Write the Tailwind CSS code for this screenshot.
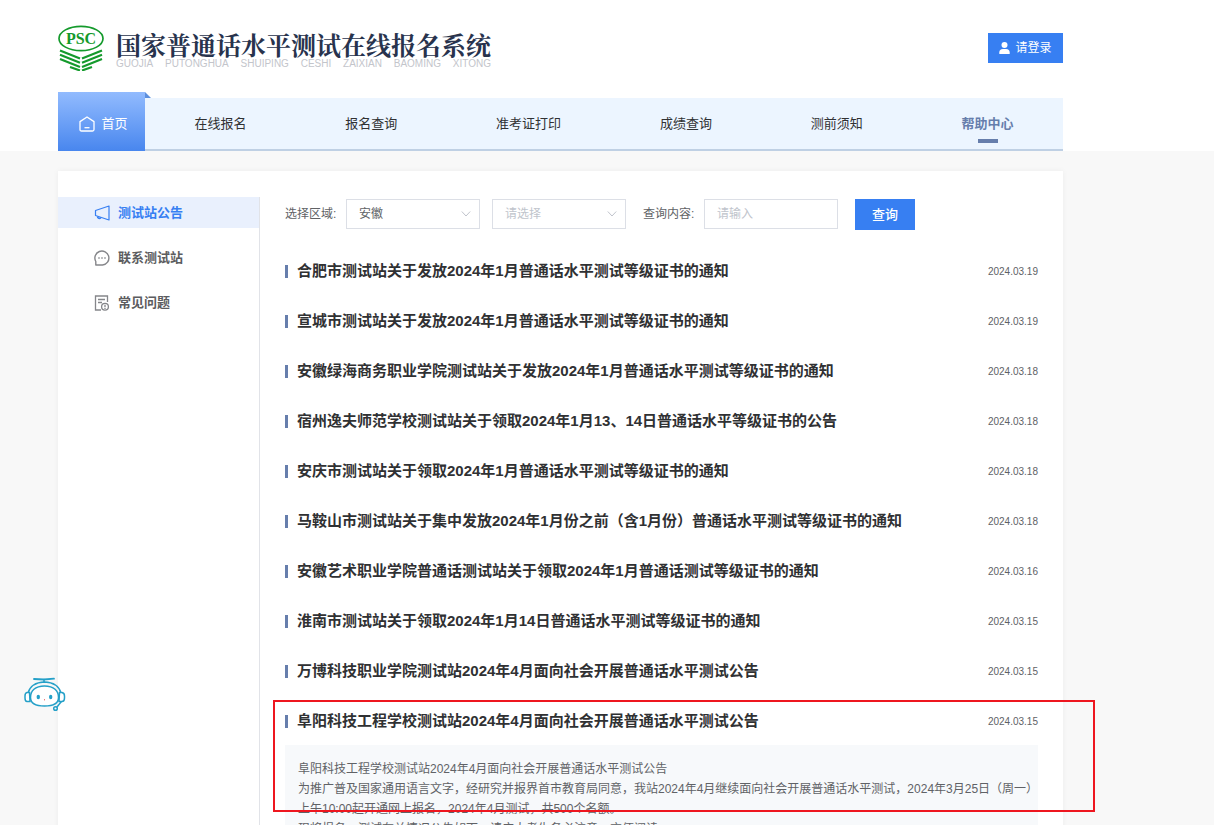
<!DOCTYPE html>
<html lang="zh-CN">
<head>
<meta charset="utf-8">
<meta name="viewport" content="width=device-width, initial-scale=1">
<title>国家普通话水平测试在线报名系统</title>
<script src="https://cdn.jsdelivr.net/npm/@tailwindcss/browser@4"></script>
</head>
<body class="h-screen overflow-hidden bg-[#f8f8f8] font-['Liberation_Sans','Noto_Sans_CJK_SC',sans-serif] text-[13px] text-[#303133]">
<header class="bg-white pl-[58px] pr-[151px]">
  <div class="flex h-[92px] items-center justify-between pt-1">
    <a href="#" class="flex items-center gap-3">
      <svg class="h-[46px] w-[46px]" viewBox="0 0 46 46" fill="none" stroke="#149a2c">
        <ellipse cx="23" cy="13.500" rx="22" ry="12.200" stroke-width="1.700"/>
        <text x="23" y="18.500" text-anchor="middle" font-family="Liberation Serif, serif" font-weight="700" font-size="16" fill="#149a2c" stroke="none">PSC</text>
        <g stroke-width="2.200">
          <path d="M2 25.500L22 33.500M2 29.800L22 37.800M2 34L22 42M12 42L22 45.500"/>
          <path d="M44 25.500L24 33.500M44 29.800L24 37.800M44 34L24 42M34 42L24 45.500"/>
        </g>
      </svg>
      <span class="flex flex-col pt-1">
        <span class="font-['Noto_Serif_CJK_SC','Noto_Sans_CJK_SC',serif] text-[25px] leading-7 font-bold text-[#28334d]">国家普通话水平测试在线报名系统</span>
        <span class="flex justify-between text-[10px] leading-3 text-[#c3c5cb]"><span>GUOJIA</span><span>PUTONGHUA</span><span>SHUIPING</span><span>CESHI</span><span>ZAIXIAN</span><span>BAOMING</span><span>XITONG</span></span>
      </span>
    </a>
    <button type="button" class="flex h-[30px] w-[75px] items-center justify-center gap-[5px] bg-[#377ff2] text-xs text-white">
      <svg class="h-3 w-[11px]" viewBox="0 0 11 12" fill="currentColor"><circle cx="5.500" cy="3" r="3"/><path d="M0.300 12V10.500Q0.300 7 4 7H7Q10.700 7 10.700 10.500V12Z"/></svg>
      请登录
    </button>
  </div>
  <nav class="flex items-end">
    <a href="#" class="relative flex h-[59px] w-[87px] items-center justify-center gap-1.5 bg-linear-to-b from-[#92bbfe] to-[#4886ee] pt-1 pl-1 text-white">
      <svg class="h-4 w-4" viewBox="0 0 16 16" fill="none" stroke="currentColor" stroke-width="1.300" stroke-linejoin="round"><path d="M1 5.600L8 1L15 5.600V13.500Q15 15 13.500 15H2.500Q1 15 1 13.500Z"/><path d="M5.500 11.700H10.500"/></svg>
      首页
      <svg class="absolute top-0 left-full h-1.5 w-1.5" viewBox="0 0 6 6" fill="#5d8fdd"><path d="M0 0L6 6H0Z"/></svg>
    </a>
    <div class="flex h-[53px] flex-1 border-b-2 border-[#bfd0e4] bg-[#ecf5ff]">
      <a href="#" class="flex flex-auto items-center justify-center">在线报名</a>
      <a href="#" class="flex flex-auto items-center justify-center">报名查询</a>
      <a href="#" class="flex flex-auto items-center justify-center">准考证打印</a>
      <a href="#" class="flex flex-auto items-center justify-center">成绩查询</a>
      <a href="#" class="flex flex-auto items-center justify-center">测前须知</a>
      <a href="#" class="relative flex flex-auto items-center justify-center font-bold text-[#667eac]">帮助中心<span class="absolute bottom-1.5 left-1/2 h-1 w-5 -translate-x-1/2 bg-[#667eac]"></span></a>
    </div>
  </nav>
</header>

<div class="pt-5 pl-[58px] pr-[151px]">
  <div class="flex min-h-screen bg-white pt-[26px] shadow-[0_0_6px_rgba(0,0,0,0.05)]">
    <aside class="w-[202px] shrink-0 border-r border-[#e1e3e8]">
      <ul class="flex flex-col gap-3.5 font-bold text-[#5c5d60]">
        <li><a href="#" class="flex h-[31px] items-center gap-2 bg-[#e9f0fd] pl-9 text-[#377ff2]">
          <svg class="h-4 w-4" viewBox="0 0 16 16" fill="none" stroke="currentColor" stroke-width="1.200" stroke-linejoin="round"><path d="M1.500 5.500L15 1V15L1.500 10.500Z"/><path d="M3.500 11.500Q4 13.800 6.200 13.200L7 12.500" stroke-width="1.600"/></svg>
          测试站公告</a></li>
        <li><a href="#" class="flex h-[31px] items-center gap-2 pl-9">
          <svg class="h-4 w-4" viewBox="0 0 16 16" fill="none" stroke="#85868a" stroke-width="1.400"><path d="M1.800 15V11.500A7 7 0 1 1 8.500 15Z" stroke-linejoin="round"/><path d="M4.300 8H5.700M7.300 8H8.700M10.300 8H11.700"/></svg>
          联系测试站</a></li>
        <li><a href="#" class="flex h-[31px] items-center gap-2 pl-9">
          <svg class="h-4 w-4" viewBox="0 0 16 16" fill="none" stroke="#85868a" stroke-width="1.300"><path d="M13.500 7V1H1.500V15H7M4 4.500H11M4 7.500H8"/><circle cx="11" cy="11.800" r="3.400"/><path d="M11 9.800V12.200M11 13V14"/></svg>
          常见问题</a></li>
      </ul>
    </aside>

    <main class="min-w-0 flex-1 px-[25px]">
      <form class="flex items-start pt-0.5 text-xs text-[#606266]">
        <label for="area" class="w-[61px] leading-[30px] whitespace-nowrap">选择区域:</label>
        <span class="relative mr-3 w-[134px]">
          <select id="area" class="h-[30px] w-full appearance-none border border-[#dcdfe6] bg-white px-3"><option>安徽</option></select>
          <svg class="pointer-events-none absolute top-[11px] right-[9px] h-2 w-2.5" viewBox="0 0 10 8" fill="none" stroke="#c0c4cc"><path d="M0.800 1.500L5 6L9.200 1.500"/></svg>
        </span>
        <span class="relative mr-[17px] w-[134px]">
          <select aria-label="选择测试站" class="h-[30px] w-full appearance-none border border-[#dcdfe6] bg-white px-3 text-[#c0c4cc]"><option>请选择</option></select>
          <svg class="pointer-events-none absolute top-[11px] right-[9px] h-2 w-2.5" viewBox="0 0 10 8" fill="none" stroke="#c0c4cc"><path d="M0.800 1.500L5 6L9.200 1.500"/></svg>
        </span>
        <label for="keyword" class="w-[61px] leading-[30px] whitespace-nowrap">查询内容:</label>
        <input id="keyword" type="text" placeholder="请输入" class="mr-[17px] h-[30px] w-[134px] border border-[#dcdfe6] px-3 placeholder:text-[#c0c4cc]">
        <button type="button" class="h-[31px] w-[60px] bg-[#377ff2] text-[13px] font-medium text-white">查询</button>
      </form>

      <ul class="pt-4">
        <li class="flex h-[50px] items-center justify-between"><a href="#" class="flex items-center gap-[9px] text-[15px] font-bold"><span class="h-[13px] w-[3px] bg-[#667eac]"></span>合肥市测试站关于发放2024年1月普通话水平测试等级证书的通知</a><time class="text-[10px] text-[#606266]">2024.03.19</time></li>
        <li class="flex h-[50px] items-center justify-between"><a href="#" class="flex items-center gap-[9px] text-[15px] font-bold"><span class="h-[13px] w-[3px] bg-[#667eac]"></span>宣城市测试站关于发放2024年1月普通话水平测试等级证书的通知</a><time class="text-[10px] text-[#606266]">2024.03.19</time></li>
        <li class="flex h-[50px] items-center justify-between"><a href="#" class="flex items-center gap-[9px] text-[15px] font-bold"><span class="h-[13px] w-[3px] bg-[#667eac]"></span>安徽绿海商务职业学院测试站关于发放2024年1月普通话水平测试等级证书的通知</a><time class="text-[10px] text-[#606266]">2024.03.18</time></li>
        <li class="flex h-[50px] items-center justify-between"><a href="#" class="flex items-center gap-[9px] text-[15px] font-bold"><span class="h-[13px] w-[3px] bg-[#667eac]"></span>宿州逸夫师范学校测试站关于领取2024年1月13、14日普通话水平等级证书的公告</a><time class="text-[10px] text-[#606266]">2024.03.18</time></li>
        <li class="flex h-[50px] items-center justify-between"><a href="#" class="flex items-center gap-[9px] text-[15px] font-bold"><span class="h-[13px] w-[3px] bg-[#667eac]"></span>安庆市测试站关于领取2024年1月普通话水平测试等级证书的通知</a><time class="text-[10px] text-[#606266]">2024.03.18</time></li>
        <li class="flex h-[50px] items-center justify-between"><a href="#" class="flex items-center gap-[9px] text-[15px] font-bold"><span class="h-[13px] w-[3px] bg-[#667eac]"></span>马鞍山市测试站关于集中发放2024年1月份之前（含1月份）普通话水平测试等级证书的通知</a><time class="text-[10px] text-[#606266]">2024.03.18</time></li>
        <li class="flex h-[50px] items-center justify-between"><a href="#" class="flex items-center gap-[9px] text-[15px] font-bold"><span class="h-[13px] w-[3px] bg-[#667eac]"></span>安徽艺术职业学院普通话测试站关于领取2024年1月普通话测试等级证书的通知</a><time class="text-[10px] text-[#606266]">2024.03.16</time></li>
        <li class="flex h-[50px] items-center justify-between"><a href="#" class="flex items-center gap-[9px] text-[15px] font-bold"><span class="h-[13px] w-[3px] bg-[#667eac]"></span>淮南市测试站关于领取2024年1月14日普通话水平测试等级证书的通知</a><time class="text-[10px] text-[#606266]">2024.03.15</time></li>
        <li class="flex h-[50px] items-center justify-between"><a href="#" class="flex items-center gap-[9px] text-[15px] font-bold"><span class="h-[13px] w-[3px] bg-[#667eac]"></span>万博科技职业学院测试站2024年4月面向社会开展普通话水平测试公告</a><time class="text-[10px] text-[#606266]">2024.03.15</time></li>
        <li class="relative">
          <div class="flex h-[50px] items-center justify-between"><a href="#" class="flex items-center gap-[9px] text-[15px] font-bold"><span class="h-[13px] w-[3px] bg-[#667eac]"></span>阜阳科技工程学校测试站2024年4月面向社会开展普通话水平测试公告</a><time class="text-[10px] text-[#606266]">2024.03.15</time></div>
          <div class="-mt-px bg-[#f7f9fb] py-3.5 pl-[13px] text-xs leading-5 whitespace-nowrap text-[#606266]">
            <p>阜阳科技工程学校测试站2024年4月面向社会开展普通话水平测试公告</p>
            <p>为推广普及国家通用语言文字，经研究并报界首市教育局同意，我站2024年4月继续面向社会开展普通话水平测试，2024年3月25日（周一）</p>
            <p>上午10:00起开通网上报名，2024年4月测试，共500个名额。</p>
            <p>现将报名、测试有关情况公告如下，请广大考生务必注意，方便阅读。</p>
          </div>
          <div class="pointer-events-none absolute top-1 -right-[57px] -left-3 h-28 border-2 border-[#ee161f]"></div>
        </li>
      </ul>
    </main>
  </div>
</div>

<button type="button" aria-label="智能客服" class="fixed bottom-[113px] left-6">
  <svg class="h-[35px] w-[42px]" viewBox="0 0 42 35" fill="none" stroke="#25a0c8" stroke-width="1.500" stroke-linecap="round">
    <path d="M10 2L20 2.500L30 1.700" stroke-width="1.800"/><path d="M20 2.500V5"/>
    <path d="M4 16Q7 5.500 20.500 5Q34 5.500 37 16"/>
    <path d="M20.500 9C11 9 6.500 14 6.500 20.500C6.500 26 11 29 20.500 29S34.500 26 34.500 20.500C34.500 14 30 9 20.500 9Z" fill="white"/>
    <path d="M5.500 15.500H3Q1 16 1 19V21Q1 24.500 3 24.500H6ZM35.500 15.500H38Q40.500 16 40.500 19V21Q40.500 24.500 38 24.500H35Z" fill="white"/>
    <path d="M37 25L33 30"/><circle cx="31.500" cy="31.500" r="1.800"/>
    <g fill="#25a0c8" stroke="none"><ellipse cx="14.300" cy="20" rx="1.700" ry="2.200"/><ellipse cx="26.700" cy="20" rx="1.700" ry="2.200"/></g>
    <path d="M20.500 22.500V23" stroke="#f06a6a" stroke-width="1"/>
  </svg>
</button>
</body>
</html>
